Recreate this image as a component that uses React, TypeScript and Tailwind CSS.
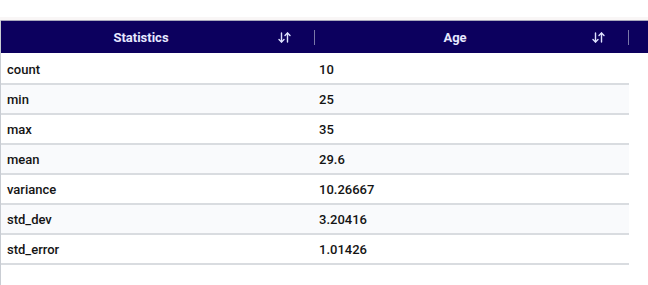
const rows: [string, string][] = [
  ["count", "10"],
  ["min", "25"],
  ["max", "35"],
  ["mean", "29.6"],
  ["variance", "10.26667"],
  ["std_dev", "3.20416"],
  ["std_error", "1.01426"],
];

function SortIcon() {
  return (
    <svg width="13" height="11" viewBox="0 0 13 11" fill="none" stroke="#dfe3ff" strokeWidth="1.4" strokeLinecap="round" strokeLinejoin="round">
      <path d="M3.5 1v9" />
      <path d="M1 7.5l2.5 2.5 2.5-2.5" />
      <path d="M9.5 10V1" />
      <path d="M7 3.5l2.5-2.5 2.5 2.5" />
    </svg>
  );
}

function HeaderCell({ label }: { label: string }) {
  return (
    <div className="w-[314px] h-full flex items-center pl-[6px] shrink-0">
      <span className="w-[268px] pt-px text-center text-[13px] font-bold text-[#e6e8ff]">{label}</span>
      <span className="ml-[3px] flex items-center">
        <SortIcon />
      </span>
      <span className="ml-[23px] w-px h-[15px] bg-[#7a78a8]" />
    </div>
  );
}

export default function App() {
  return (
    <div
      className="w-[648px] h-[285px] bg-white overflow-hidden"
      style={{ fontFamily: "Roboto, 'Liberation Sans', sans-serif" }}
    >
      <div className="h-[17px]" />
      <div className="h-[3px] bg-[#f9f6f6]" />
      <div className="h-[265px] border-l border-[#c9cdd3]">
        {/* Header */}
        <div className="h-[33px] flex bg-[#0c005e] border-t border-[#a9a9bd]">
          <HeaderCell label="Statistics" />
          <HeaderCell label="Age" />
        </div>

        {/* Body */}
        <div className="w-[628px] mt-[2px]">
          {rows.map(([name, value], i) => (
            <div
              key={name}
              className={`h-[30px] flex items-center pt-px border-b-2 border-[#d9dce0] text-[13px] font-medium text-[#141414] ${
                i % 2 === 1 ? "bg-[#f9fafc]" : "bg-white"
              }`}
            >
              <div className="w-[313px] pl-[6px]">{name}</div>
              <div className="flex-1 pl-[5px]">{value}</div>
            </div>
          ))}
        </div>
      </div>
    </div>
  );
}
